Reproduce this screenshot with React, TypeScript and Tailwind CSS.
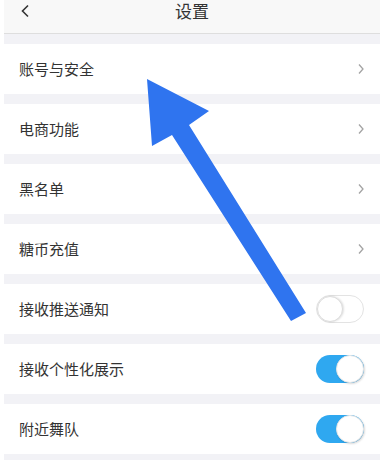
const font = { fontFamily: '"Noto Sans CJK SC", "Noto Sans", sans-serif' };

type Row = { label: string; kind: "link" | "on" | "off" };

const rows: Row[] = [
  { label: "账号与安全", kind: "link" },
  { label: "电商功能", kind: "link" },
  { label: "黑名单", kind: "link" },
  { label: "糖币充值", kind: "link" },
  { label: "接收推送通知", kind: "off" },
  { label: "接收个性化展示", kind: "on" },
  { label: "附近舞队", kind: "on" },
];

function Chevron() {
  return (
    <svg width="8" height="12" viewBox="0 0 8 12" className="mr-[15px]">
      <path d="M2 1.5 L6 6 L2 10.5" fill="none" stroke="#a3a3a3" strokeWidth="1.3" />
    </svg>
  );
}

function Toggle({ on }: { on: boolean }) {
  return (
    <div
      className={
        on
          ? "mr-[16px] flex h-[28px] w-[48px] justify-end rounded-full bg-[#2fa8f0]"
          : "mr-[16px] flex h-[28px] w-[48px] justify-start rounded-full border border-[#e3e3e3] bg-white"
      }
    >
      <div
        className={
          on
            ? "h-[28px] w-[28px] rounded-full border border-[#e6e6e6] bg-white shadow-[1px_1px_2px_rgba(0,0,0,0.15)]"
            : "h-[26px] w-[26px] rounded-full border border-[#dcdcdc] bg-white shadow-[1px_0_2px_rgba(0,0,0,0.12)]"
        }
      />
    </div>
  );
}

export default function App() {
  return (
    <div className="relative h-[460px] w-[380px] overflow-hidden bg-white pl-[4px]" style={font}>
      <div className="relative flex h-[34px] items-start justify-center border-b border-[#dedede] bg-[#f8f8f8]">
        <svg width="10" height="14" viewBox="0 0 10 14" className="absolute left-[16px] top-[4px]">
          <path d="M8 1.5 L2.5 7 L8 12.5" fill="none" stroke="#333" strokeWidth="1.6" />
        </svg>
        <span className="mt-[1px] text-[17px] leading-[19px] text-[#333]">设置</span>
      </div>
      <div className="flex flex-col gap-[10px] bg-[#f2f2f6] pt-[10px] pb-[10px]">
        {rows.map((r) => (
          <div key={r.label} className="flex h-[50px] items-center justify-between bg-white">
            <span className="pl-[15px] text-[15px] text-[#333]">{r.label}</span>
            {r.kind === "link" ? <Chevron /> : <Toggle on={r.kind === "on"} />}
          </div>
        ))}
      </div>
      <svg className="pointer-events-none absolute left-0 top-0" width="380" height="460" viewBox="0 0 380 460">
        <polygon
          points="147,79 209,111 189,125 306,313 291,321 172,135 152,146"
          fill="#2f74ef"
        />
      </svg>
    </div>
  );
}
